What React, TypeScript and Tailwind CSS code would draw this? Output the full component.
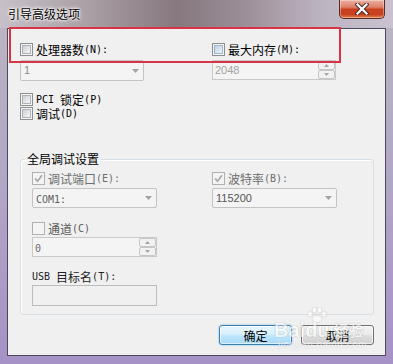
import React from "react";

const CJK = /([\u3000-\u9fff\uff00-\uffef]+)/;

function T({ s, mono = true }: { s: string; mono?: boolean }) {
  const parts = s.split(CJK).filter((p) => p.length > 0);
  return (
    <>
      {parts.map((p, i) =>
        CJK.test(p) ? (
          <span key={i} className="font-['Noto_Sans_CJK_SC',sans-serif] text-[12px]">
            {p}
          </span>
        ) : mono ? (
          <span key={i} className="font-['DejaVu_Sans_Mono',monospace] text-[10px] whitespace-pre">
            {p}
          </span>
        ) : (
          <span key={i} className="font-['Liberation_Sans',sans-serif] text-[11px] whitespace-pre">
            {p}
          </span>
        )
      )}
    </>
  );
}

type BoxState = "off" | "hot" | "dischecked" | "disoff";

function Box({ state }: { state: BoxState }) {
  if (state === "dischecked") {
    return (
      <span className="flex h-[13px] w-[13px] shrink-0 items-center justify-center border border-[#b1b1b1] bg-[#f4f4f4]">
        <svg width="9" height="9" viewBox="0 0 9 9">
          <path d="M1 4.5 L3.5 7.2 L8 1.2" fill="none" stroke="#a9a9a9" strokeWidth="1.8" />
        </svg>
      </span>
    );
  }
  if (state === "disoff") {
    return <span className="block h-[13px] w-[13px] shrink-0 border border-[#b1b1b1] bg-[#f4f4f4]" />;
  }
  const inner =
    state === "hot"
      ? "border-[#9fb7cc] bg-[linear-gradient(135deg,#bcd2e4,#eef4f9)]"
      : "border-[#aeb3b9] bg-[linear-gradient(135deg,#cbcfd5,#f7f7f7)]";
  return (
    <span className="flex h-[13px] w-[13px] shrink-0 border border-[#8e8f8f] bg-[#f4f4f4] p-[1px]">
      <span className={"block h-full w-full border " + inner} />
    </span>
  );
}

function CheckRow({
  state,
  label,
  color = "text-black",
  className = "",
}: {
  state: BoxState;
  label: string;
  color?: string;
  className?: string;
}) {
  return (
    <div className={"flex h-[13px] items-center gap-[3px] leading-[13px] " + color + " " + className}>
      <Box state={state} />
      <span className="flex items-center whitespace-nowrap">
        <T s={label} />
      </span>
    </div>
  );
}

function Combo({
  children,
  className = "",
}: {
  children: React.ReactNode;
  className?: string;
}) {
  return (
    <div
      className={
        "flex items-center rounded-[2px] border border-[#c3c3c3] bg-[#f4f4f4] pl-[3px] pr-[4px] leading-[13px] " +
        className
      }
    >
      <span className="flex flex-1 items-center">{children}</span>
      <svg width="7" height="4" viewBox="0 0 7 4">
        <path d="M0 0 H7 L3.5 4 Z" fill="#a2a2a2" />
      </svg>
    </div>
  );
}

function Spin({
  children,
  className = "",
}: {
  children: React.ReactNode;
  className?: string;
}) {
  return (
    <div className={"flex border border-[#c9c9c9] bg-[#f4f4f4] leading-[13px] " + className}>
      <span className="flex flex-1 items-center pl-[2px]">{children}</span>
      <div className="flex w-[17px] flex-col">
        <div className="flex flex-1 items-center justify-center rounded-[2px] border border-[#c6c6c6] bg-[#f2f2f2]">
          <svg width="5" height="3" viewBox="0 0 5 3">
            <path d="M0 3 H5 L2.5 0 Z" fill="#a6a6a6" />
          </svg>
        </div>
        <div className="flex flex-1 items-center justify-center rounded-[2px] border border-[#c6c6c6] bg-[#f2f2f2]">
          <svg width="5" height="3" viewBox="0 0 5 3">
            <path d="M0 0 H5 L2.5 3 Z" fill="#a6a6a6" />
          </svg>
        </div>
      </div>
    </div>
  );
}

export default function App() {
  return (
    <div className="relative h-[364px] w-[393px] overflow-hidden bg-[linear-gradient(180deg,#bdb5c2_0%,#b2a6c6_50%,#a692c6_100%)] font-['Noto_Sans_CJK_SC',sans-serif]">
      {/* title bar */}
      <div className="flex h-[28px] items-start bg-[linear-gradient(90deg,#c8c0c8_0%,#aaa0a6_22%,#86787e_45%,#9c8e98_62%,#bdb4c2_82%,#c9c1cf_100%)]">
        <span className="ml-[8px] mt-[6px] text-[12px] leading-[15px] text-black [text-shadow:0_0_5px_#fff,0_0_3px_#fff,0_0_2px_#fff]">
          引导高级选项
        </span>
        <div className="ml-auto mr-[8px] flex h-[19px] w-[46px] items-center justify-center rounded-b-[5px] border border-t-0 border-[#5b2b25] bg-[linear-gradient(180deg,#eab0a2_0%,#de7f68_40%,#c8411f_52%,#c9401e_80%,#e2804f_100%)] shadow-[inset_0_0_0_1px_rgba(255,255,255,0.35)]">
          <svg width="14" height="12" viewBox="0 0 14 12">
            <path d="M2.5 1.5 L11.5 10.5 M11.5 1.5 L2.5 10.5" stroke="#4a2a28" strokeWidth="4.2" strokeLinecap="square" />
            <path d="M2.5 1.5 L11.5 10.5 M11.5 1.5 L2.5 10.5" stroke="#ffffff" strokeWidth="2.2" strokeLinecap="square" />
          </svg>
        </div>
      </div>

      {/* client area */}
      <div className="relative ml-[7px] h-[328px] w-[379px] border border-[#4b4a5c] bg-[#f0f0f0] pl-[12px] pr-[11px] pt-[14px]">
        <div className="grid grid-cols-[192px_124px]">
          <div className="flex flex-col">
            <CheckRow state="off" label="处理器数(N):" />
            <Combo className="mt-[4px] h-[21px] w-[124px]">
              <span className="font-['Liberation_Sans',sans-serif] text-[11px] text-[#8a8a8a]">1</span>
            </Combo>
          </div>
          <div className="flex flex-col">
            <CheckRow state="hot" label="最大内存(M):" />
            <Spin className="mt-[4px] h-[20px] w-[124px]">
              <span className="font-['Liberation_Sans',sans-serif] text-[11px] text-[#a3a3a3]">2048</span>
            </Spin>
          </div>
        </div>

        <CheckRow state="off" label="PCI 锁定(P)" className="mt-[12px]" />
        <CheckRow state="off" label="调试(D)" className="mt-[1px]" />

        <fieldset className="mt-[33px] w-[354px] rounded-[3px] border border-[#d5dfe5] pb-[8px] pl-[11px] pt-[7px] shadow-[inset_1px_1px_0_#fff]">
          <legend className="ml-[-7px] px-[2px] text-[12px] leading-[12px] text-black">全局调试设置</legend>
          <div className="grid grid-cols-[180px_125px]">
            <div className="flex flex-col">
              <CheckRow state="dischecked" label="调试端口(E):" color="text-[#6d6d6d]" />
              <Combo className="mt-[3px] h-[20px] w-[125px]">
                <span className="text-[#5f5f5f]">
                  <T s="COM1:" />
                </span>
              </Combo>
              <CheckRow state="disoff" label="通道(C)" color="text-[#5a5a5a]" className="mt-[14px]" />
              <Spin className="mt-[2px] h-[20px] w-[125px]">
                <span className="text-[#6d6d6d]">
                  <T s="0" />
                </span>
              </Spin>
              <div className="mt-[13px] flex h-[13px] items-center leading-[13px] text-[#222]">
                <T s="USB 目标名(T):" />
              </div>
              <div className="mt-[2px] h-[21px] w-[125px] border border-[#bcbcbc] bg-[#f0f0f0]" />
            </div>
            <div className="flex flex-col">
              <CheckRow state="dischecked" label="波特率(B):" color="text-[#6d6d6d]" />
              <Combo className="mt-[3px] h-[20px] w-[125px]">
                <span className="font-['Liberation_Sans',sans-serif] text-[11px] text-[#555]">115200</span>
              </Combo>
            </div>
          </div>
        </fieldset>

        <div className="mt-[10px] flex w-[354px] justify-end gap-[9px]">
          <div className="flex h-[20px] w-[73px] items-center justify-center rounded-[3px] border border-[#3c7fb1] bg-[linear-gradient(180deg,#eaf6fd_0%,#d9f0fc_45%,#bee6fd_55%,#a7d9f5_100%)] text-[12px] leading-[13px] text-black shadow-[0_0_2px_#5fb2ea,inset_0_0_0_1px_rgba(255,255,255,0.6)]">
            确定
          </div>
          <div className="flex h-[20px] w-[73px] items-center justify-center rounded-[3px] border border-[#707070] bg-[linear-gradient(180deg,#f2f2f2_0%,#ebebeb_45%,#dddddd_55%,#cfcfcf_100%)] text-[12px] leading-[13px] text-black shadow-[inset_0_0_0_1px_rgba(255,255,255,0.7)]">
            取消
          </div>
        </div>
      </div>

      {/* red annotation */}
      <div className="absolute left-[9px] top-[27px] h-[36px] w-[332px] border-2 border-[#d63546]" />

      {/* watermark */}
      <div className="pointer-events-none absolute left-[274px] top-[307px] flex flex-col items-start opacity-60">
        <div className="flex items-end leading-[18px]">
          <span className="font-['Liberation_Sans',sans-serif] text-[20px] font-bold text-white [text-shadow:0_0_1px_#999,0_0_1px_#999]">
            Bai
          </span>
          <span className="relative flex flex-col items-center">
            <svg width="22" height="16" viewBox="0 0 22 16" className="mb-[-2px]">
              <g fill="#fff" stroke="#bbb" strokeWidth="0.6">
                <ellipse cx="4" cy="7" rx="2.5" ry="3" />
                <ellipse cx="8.5" cy="3" rx="2.5" ry="3" />
                <ellipse cx="13.5" cy="3" rx="2.5" ry="3" />
                <ellipse cx="18" cy="7" rx="2.5" ry="3" />
                <ellipse cx="11" cy="12" rx="5" ry="3.5" />
              </g>
            </svg>
            <span className="font-['Liberation_Sans',sans-serif] text-[20px] font-bold text-white [text-shadow:0_0_1px_#999,0_0_1px_#999]">
              du
            </span>
          </span>
          <span className="ml-[4px] text-[15px] font-bold text-white [text-shadow:0_0_1px_#999,0_0_1px_#999]">
            经验
          </span>
        </div>
        <span className="ml-[4px] mt-[1px] font-['Liberation_Sans',sans-serif] text-[10px] leading-[10px] tracking-[0.5px] text-white [text-shadow:0_0_1px_#aaa]">
          jingyan.baidu.com
        </span>
      </div>
    </div>
  );
}
